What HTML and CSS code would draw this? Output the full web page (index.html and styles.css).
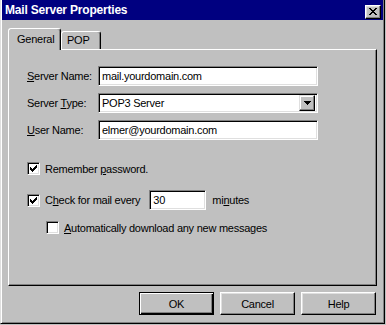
FILE: index.html
```html
<!DOCTYPE html>
<html lang="en">

<head>
    <meta charset="UTF-8">
    <meta name="viewport" content="width=device-width, initial-scale=1.0">
    <title>Mail Server Properties</title>
    <link rel="stylesheet" href="styles.css">
</head>

<body>
    <div class="window">
        <div class="titlebar">
            <span class="title">Mail Server Properties</span>
            <span class="close-btn">
                <svg width="8" height="7" viewBox="0 0 8 7" shape-rendering="crispEdges">
                    <path d="M0 0h2v1h-2z M6 0h2v1h-2z M1 1h2v1h-2z M5 1h2v1h-2z M2 2h4v1h-4z M3 3h2v1h-2z M2 4h4v1h-4z M1 5h2v1h-2z M5 5h2v1h-2z M0 6h2v1h-2z M6 6h2v1h-2z" fill="#000"/>
                </svg>
            </span>
        </div>

        <!-- Tabs -->
        <div class="tabs">
            <div class="tab active">General</div>
            <div class="tab">POP</div>
        </div>

        <div class="panel">
            <div class="fields">
                <span class="label"><u>S</u>erver Name:</span>
                <span class="textbox">mail.yourdomain.com</span>

                <span class="label">Server <u>T</u>ype:</span>
                <span class="textbox select">
                    POP3 Server
                    <span class="drop-btn">
                        <svg width="7" height="4" viewBox="0 0 7 4" shape-rendering="crispEdges">
                            <path d="M0 0h7v1h-1v1h-1v1h-1v1h-1v-1h-1v-1h-1v-1h-1z" fill="#000"/>
                        </svg>
                    </span>
                </span>

                <span class="label"><u>U</u>ser Name:</span>
                <span class="textbox">elmer@yourdomain.com</span>
            </div>

            <!-- Options -->
            <div class="check-row first">
                <span class="checkbox">
                    <svg width="7" height="7" viewBox="0 0 7 7" shape-rendering="crispEdges">
                        <path d="M0 2h1v3h-1z M1 3h1v3h-1z M2 4h1v3h-1z M3 3h1v3h-1z M4 2h1v3h-1z M5 1h1v3h-1z M6 0h1v3h-1z" fill="#000"/>
                    </svg>
                </span>
                <span>Remember <u>p</u>assword.</span>
            </div>

            <div class="check-row second">
                <span class="checkbox">
                    <svg width="7" height="7" viewBox="0 0 7 7" shape-rendering="crispEdges">
                        <path d="M0 2h1v3h-1z M1 3h1v3h-1z M2 4h1v3h-1z M3 3h1v3h-1z M4 2h1v3h-1z M5 1h1v3h-1z M6 0h1v3h-1z" fill="#000"/>
                    </svg>
                </span>
                <span>C<u>h</u>eck for mail every</span>
                <span class="textbox small">30</span>
                <span class="minutes">mi<u>n</u>utes</span>
            </div>

            <div class="check-row third">
                <span class="checkbox"></span>
                <span><u>A</u>utomatically download any new messages</span>
            </div>
        </div>

        <div class="buttons">
            <span class="btn default">OK</span>
            <span class="btn">Cancel</span>
            <span class="btn">Help</span>
        </div>
    </div>
</body>

</html>
```

FILE: styles.css
```css
body {
    margin: 0;
    background-color: #c0c0c0;
    font-family: "Liberation Sans", Arial, sans-serif;
    font-size: 11px;
    letter-spacing: -0.25px;
    color: #000;
}

u {
    text-decoration-thickness: 1px;
    text-underline-offset: 1px;
}

/* Window frame */
.window {
    box-sizing: border-box;
    width: 385px;
    height: 324px;
    background-color: #c0c0c0;
    border: 1px solid;
    border-top: 0;
    border-color: #dfdfdf #000 #000 #dfdfdf;
    box-shadow: inset 1px 0 #fff, inset -1px -1px #808080;
    padding: 0 1px 1px 1px;
    display: flex;
    flex-direction: column;
}

.titlebar {
    height: 20px;
    background-color: #000080;
    display: flex;
    align-items: center;
    justify-content: space-between;
    padding: 0 2px 0 3px;
}

.title {
    color: #fff;
    font-weight: bold;
    font-size: 12px;
    letter-spacing: -0.2px;
}

.close-btn {
    box-sizing: border-box;
    width: 16px;
    height: 14px;
    margin-top: 3px;
    background-color: #c0c0c0;
    border: 1px solid;
    border-color: #fff #000 #000 #fff;
    box-shadow: inset -1px -1px #808080, inset 1px 1px #dfdfdf;
    display: flex;
    align-items: center;
    justify-content: center;
}

/* Tabs */
.tabs {
    display: flex;
    align-items: flex-end;
    height: 21px;
    margin: 8px 0 0 6px;
    position: relative;
    z-index: 1;
}

.tab {
    box-sizing: border-box;
    height: 18px;
    width: 40px;
    padding: 2px 0 0 5px;
    background-color: #c0c0c0;
    border: 1px solid;
    border-bottom: 0;
    border-color: #fff #000 transparent #fff;
    border-radius: 3px 3px 0 0;
    box-shadow: inset -1px 0 #808080;
}

.tab.active {
    height: 22px;
    width: 53px;
    margin-bottom: -1px;
    padding: 4px 0 0 8px;
}

/* Tab panel */
.panel {
    box-sizing: border-box;
    width: 369px;
    height: 237px;
    margin-left: 6px;
    border: 1px solid;
    border-color: #fff #000 #000 #fff;
    box-shadow: inset -1px -1px #808080;
    padding: 16px 0 0 18px;
}

.fields {
    display: grid;
    grid-template-columns: 71px 220px;
    row-gap: 7px;
    align-items: center;
}

.textbox {
    box-sizing: border-box;
    height: 20px;
    background-color: #fff;
    border: 1px solid;
    border-color: #808080 #fff #fff #808080;
    box-shadow: inset 1px 1px #000, inset -1px -1px #dfdfdf;
    padding: 0 3px;
    display: flex;
    align-items: center;
    white-space: nowrap;
}

.textbox.select {
    justify-content: space-between;
    padding-right: 2px;
}

.drop-btn {
    box-sizing: border-box;
    width: 16px;
    height: 16px;
    background-color: #c0c0c0;
    border: 1px solid;
    border-color: #dfdfdf #000 #000 #dfdfdf;
    box-shadow: inset -1px -1px #808080, inset 1px 1px #fff;
    display: flex;
    align-items: center;
    justify-content: center;
}

/* Checkbox rows */
.check-row {
    display: flex;
    align-items: center;
}

.check-row.first {
    height: 13px;
    margin-top: 22px;
}

.check-row.second {
    height: 20px;
    margin-top: 15px;
}

.check-row.third {
    height: 13px;
    margin-top: 11px;
    padding-left: 19px;
}

.checkbox {
    box-sizing: border-box;
    width: 13px;
    height: 13px;
    margin-right: 5px;
    background-color: #fff;
    border: 1px solid;
    border-color: #808080 #fff #fff #808080;
    box-shadow: inset 1px 1px #000, inset -1px -1px #dfdfdf;
    display: flex;
    align-items: center;
    justify-content: center;
}

.textbox.small {
    width: 57px;
    margin-left: 9px;
}

.minutes {
    margin-left: 6px;
}

/* Dialog buttons */
.buttons {
    display: flex;
    justify-content: flex-end;
    gap: 6px;
    margin: 6px 7px 0 0;
}

.btn {
    box-sizing: border-box;
    width: 75px;
    height: 23px;
    border: 1px solid;
    border-color: #fff #000 #000 #fff;
    box-shadow: inset -1px -1px #808080, inset 1px 1px #dfdfdf;
    display: flex;
    align-items: center;
    justify-content: center;
}

.btn.default {
    border-color: #000;
    box-shadow: inset 1px 1px #fff, inset -1px -1px #000, inset -2px -2px #808080;
}
```
